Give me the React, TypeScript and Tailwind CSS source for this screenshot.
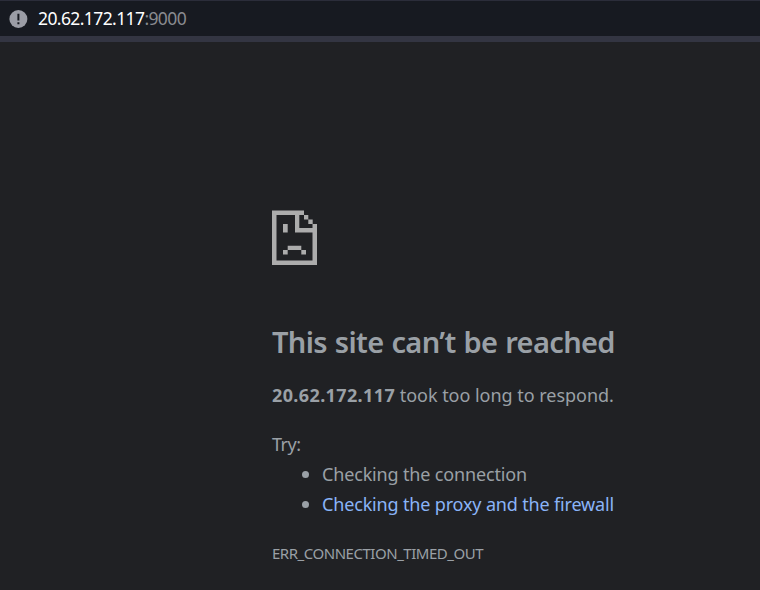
function AlertIcon() {
  return (
    <svg className="block h-[18px] w-[19px] shrink-0" viewBox="0 0 19 18">
      <circle cx="9.4" cy="9" r="9" fill="#9b9da6" />
      <path d="M8.4 3.8h2v6.6h-2zM8.4 12.2h2v2h-2z" fill="#171a21" />
    </svg>
  );
}

function SadPageIcon() {
  return (
    <svg className="block h-[55px] w-[45px]" viewBox="0 0 45 55" fill="#acacac">
      <path d="M0 .4H32V5H27.3V18H45V55H0ZM4.5 5V50.5H40.5V22.5H23V5Z" fillRule="evenodd" />
      <path d="M32 5h4.3v4.5H32zM36.3 9.5h4.4V14h-4.4zM40.5 14H45v5h-4.5z" />
      <path d="M11 14h4.7v8.5H11zM15.7 35.8h13.6V40H15.7zM11 40h4.7v4.4H11zM29.3 40H34v4.4h-4.7z" />
    </svg>
  );
}

export default function App() {
  return (
    <div className="h-[590px] w-[760px] overflow-hidden bg-[#202124] font-['Noto_Sans',sans-serif] text-[18px] text-[#9aa0a6]">
      <header className="flex h-[42px] items-center border-t border-b-[6px] border-t-[#2b2d3a] border-b-[#333542] bg-[#171a21] pl-[9px]">
        <AlertIcon />
        <div className="mb-[2px] ml-[10px] text-[17.5px] leading-6 tracking-[-0.6px] whitespace-nowrap text-[#898b90]">
          <span className="text-white">20.62.172.117</span>:9000
        </div>
      </header>
      <main className="pt-[168px] pl-[272px] whitespace-nowrap">
        <SadPageIcon />
        <h1 className="mt-[57px] w-fit text-[29px] leading-10 font-semibold tracking-[-0.64px] [word-spacing:1px]">This site can’t be reached</h1>
        <p className="mt-[18px] w-fit leading-[30px] tracking-[-0.03px]">
          <strong className="font-bold tracking-[0.38px]">20.62.172.117</strong> <span>took too long to respond.</span>
        </p>
        <p className="mt-[19px] w-fit leading-[30px] tracking-[-0.5px]">Try:</p>
        <ul className="leading-[30px] tracking-[-0.16px]">
          <li className="flex items-center pl-[30px]">
            <span className="mr-[13px] size-[7px] rounded-full bg-[#9aa0a6]" />
            <span>Checking the connection</span>
          </li>
          <li className="flex items-center pl-[30px]">
            <span className="mr-[13px] size-[7px] rounded-full bg-[#9aa0a6]" />
            <a className="text-[#8ab4f8]">Checking the proxy and the firewall</a>
          </li>
        </ul>
        <p className="mt-[19px] w-fit text-[15px] leading-[30px] tracking-[-0.47px]">ERR_CONNECTION_TIMED_OUT</p>
      </main>
    </div>
  );
}
